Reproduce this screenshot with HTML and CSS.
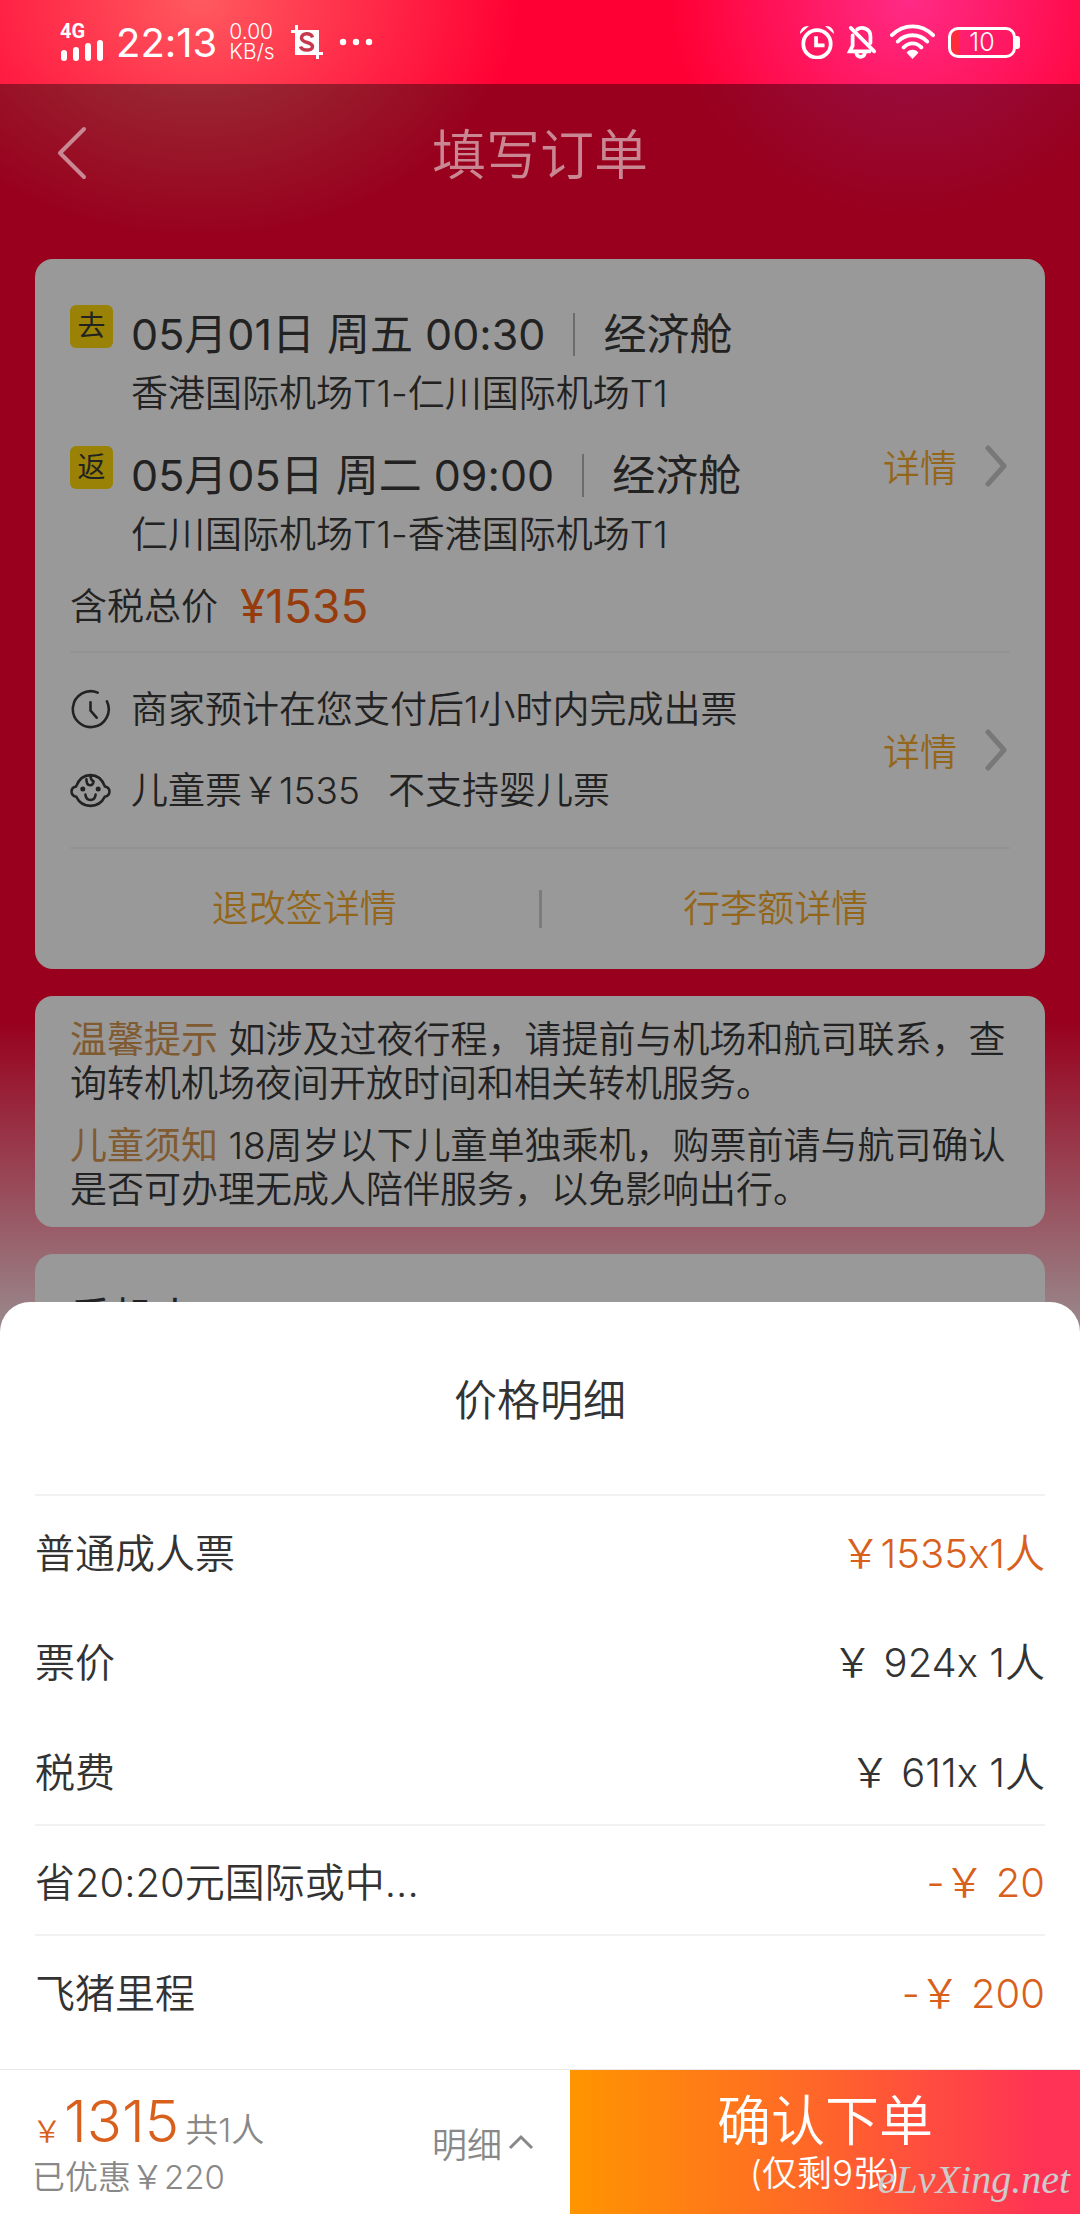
FILE: index.html
```html
<!DOCTYPE html>
<html lang="zh-CN">
<head>
<meta charset="utf-8">
<meta name="viewport" content="width=device-width, initial-scale=1">
<title>填写订单</title>
<link rel="stylesheet" href="styles.css">
</head>
<body>
<div class="app">
  <header class="statusbar">
    <div class="status-group">
      <div class="network">
        <span class="network-type">4G</span>
        <svg class="signal" viewBox="0 0 44 22" aria-hidden="true"><path d="M4 14v5M16 11v8M28 7v12M40 4v15" stroke="currentColor" stroke-width="6" stroke-linecap="round"/></svg>
      </div>
      <span class="clock">22:13</span>
      <div class="speed"><span>0.00</span><span>KB/s</span></div>
      <svg class="crop-icon" viewBox="0 0 32 34" aria-hidden="true"><path d="M4 5h24v25H4z" fill="currentColor"/><path d="M0 6.500h6M5.500 0v8M26 28.500h6M26.500 26v8" stroke="currentColor" stroke-width="3"/><path d="M21.500 12.500C20 7.500 10.500 7.500 10.500 13S21.500 16.500 21.500 21.500 11 26 9.500 21.500" fill="none" stroke="#c6384c" stroke-width="3.500"/></svg>
      <svg class="dots" viewBox="0 0 34 8" aria-hidden="true"><g fill="currentColor"><circle cx="4" cy="4" r="3.200"/><circle cx="17" cy="4" r="3.200"/><circle cx="30" cy="4" r="3.200"/></g></svg>
    </div>
    <div class="status-group status-right">
      <svg class="alarm" viewBox="0 0 36 36" fill="none" stroke="currentColor" aria-hidden="true"><circle cx="18" cy="20" r="14.500" stroke-width="4"/><path d="M17 12v9.500h9" stroke-width="4"/><path d="M0 9.500C0 4 4 .500 9.500 1zM36 9.500C36 4 32 .500 26.500 1z" fill="currentColor" stroke="none"/></svg>
      <svg class="bell" viewBox="0 0 32 36" fill="none" stroke="currentColor" stroke-width="4" stroke-linecap="round" aria-hidden="true"><path d="M6 11v11l-3 6h21M11 4.500C16 1 25 4 25 12v7M10 30c1 5 8 5 9 0"/><path d="M4 3l25 25"/></svg>
      <svg class="wifi" viewBox="0 0 46 36" fill="none" stroke="currentColor" stroke-width="4" stroke-linecap="round" aria-hidden="true"><path d="M2 11C14-1 32-1 44 11M8 17.500C16 9 30 9 38 17.500M14 23.500C19 18 27 18 32 23.500"/><path d="M17 29c2-4 10-4 12 0l-6 6.500z" fill="currentColor" stroke="none"/></svg>
      <div class="battery"><span>10</span></div>
    </div>
  </header>

  <div class="page">
    <nav class="titlebar">
      <button class="back" type="button" aria-label="返回"><svg viewBox="0 0 32 56" aria-hidden="true"><path d="M28 4L4 28l24 24" fill="none" stroke="currentColor" stroke-width="4" stroke-linecap="round" stroke-linejoin="round"/></svg></button>
      <h1>填写订单</h1>
    </nav>

    <main class="cards">
      <section class="card">
        <div class="block itinerary">
          <div class="block-main">
            <div class="flight">
              <span class="badge">去</span>
              <div>
                <p class="flight-date"><span>05月01日 周五 00:30</span><span class="cabin">经济舱</span></p>
                <p class="airports">香港国际机场T1-仁川国际机场T1</p>
              </div>
            </div>
            <div class="flight">
              <span class="badge">返</span>
              <div>
                <p class="flight-date"><span>05月05日 周二 09:00</span><span class="cabin">经济舱</span></p>
                <p class="airports">仁川国际机场T1-香港国际机场T1</p>
              </div>
            </div>
            <p class="total">含税总价<span class="total-price">¥1535</span></p>
          </div>
          <a class="more" href="#flight">详情<svg viewBox="0 0 22 42" aria-hidden="true"><path d="M3 3l16 18L3 39" fill="none" stroke="currentColor" stroke-width="5" stroke-linecap="round" stroke-linejoin="round"/></svg></a>
        </div>
        <div class="block rules">
          <div class="block-main">
            <p class="rule"><svg viewBox="0 0 40 40" fill="none" stroke="currentColor" stroke-width="2.500" stroke-linecap="round" aria-hidden="true"><path d="M27 3.500A17.500 17.500 0 1 0 36 12M20 13v8l6 7"/></svg>商家预计在您支付后1小时内完成出票</p>
            <p class="rule"><svg viewBox="0 0 40 40" fill="none" stroke="currentColor" stroke-width="2.500" stroke-linecap="round" aria-hidden="true"><path d="M6 16C9 8 14 5 20 5s11 3 14 11c6 1 6 9 0 10-3 6-8 9-14 9S9 32 6 26c-6-1-6-9 0-10zM15 24c1 7 9 7 10 0M16 9c0 8 7 7 7 2M20 5c0 3 1 5 3 6"/><circle cx="12.500" cy="18.500" r="1.200" fill="currentColor"/><circle cx="27.500" cy="18.500" r="1.200" fill="currentColor"/></svg><span>儿童票￥1535</span><span class="infant">不支持婴儿票</span></p>
          </div>
          <a class="more" href="#rules">详情<svg viewBox="0 0 22 42" aria-hidden="true"><path d="M3 3l16 18L3 39" fill="none" stroke="currentColor" stroke-width="5" stroke-linecap="round" stroke-linejoin="round"/></svg></a>
        </div>
        <div class="links"><a href="#refund">退改签详情</a><a href="#baggage">行李额详情</a></div>
      </section>

      <section class="card notice">
        <p><strong>温馨提示</strong> 如涉及过夜行程，请提前与机场和航司联系，查询转机机场夜间开放时间和相关转机服务。</p>
        <p><strong>儿童须知</strong> 18周岁以下儿童单独乘机，购票前请与航司确认是否可办理无成人陪伴服务，以免影响出行。</p>
      </section>

      <section class="card passengers"><h2>乘机人</h2></section>
    </main>
  </div>

  <section class="sheet" aria-label="价格明细">
    <h2 class="sheet-title">价格明细</h2>
    <table class="prices">
      <tbody>
        <tr class="ruled"><th scope="row">普通成人票</th><td class="accent">￥1535x1人</td></tr>
        <tr><th scope="row">票价</th><td>￥ 924x 1人</td></tr>
        <tr><th scope="row">税费</th><td>￥ 611x 1人</td></tr>
        <tr class="ruled"><th scope="row">省20:20元国际或中...</th><td class="accent">-￥ 20</td></tr>
        <tr class="ruled"><th scope="row">飞猪里程</th><td class="accent">-￥ 200</td></tr>
      </tbody>
    </table>
    <footer class="checkout">
      <div class="summary">
        <div class="amounts">
          <p class="pay"><span class="yen">￥</span><span class="amount">1315</span><span class="people">共1人</span></p>
          <p class="saved">已优惠￥220</p>
        </div>
        <button class="toggle" type="button">明细<svg viewBox="0 0 26 16" aria-hidden="true"><path d="M2 14L13 3l11 11" fill="none" stroke="currentColor" stroke-width="3"/></svg></button>
      </div>
      <button class="submit" type="button"><span class="submit-label">确认下单</span><span class="submit-note">(仅剩9张)</span></button>
      <span class="watermark">eLvXing.net</span>
    </footer>
  </section>
</div>
</body>
</html>
```
FILE: styles.css
```css
* { box-sizing: border-box; }

body {
  margin: 0;
  font-family: Inter, "Noto Sans CJK SC", sans-serif;
  font-weight: 350;
  font-variant-ligatures: no-contextual;
  color: #333;
  background: #fff;
}

h1, h2, p { margin: 0; font-weight: inherit; }
a { color: inherit; text-decoration: none; }
button { border: 0; padding: 0; background: none; color: inherit; font: inherit; }
svg { display: block; flex: none; }

.app {
  min-height: 100vh;
  display: flex;
  flex-direction: column;
}

/* Status bar */
.statusbar {
  height: 84px;
  padding: 0 64px 0 60px;
  display: flex;
  align-items: center;
  justify-content: space-between;
  color: #fff;
  background:
    radial-gradient(320px 240px at 200px 0, #ff5a5f, rgba(255, 60, 80, 0)),
    radial-gradient(240px 220px at 910px 0, #ff2b86, rgba(255, 20, 90, 0)),
    #ff0034;
}
.status-group { display: flex; align-items: center; }
.network { display: flex; flex-direction: column; width: 44px; }
.network-type { font-family: Roboto, sans-serif; font-size: 20px; line-height: 16px; font-weight: 700; }
.signal { width: 44px; height: 22px; }
.clock { margin-left: 12px; font-size: 40px; font-weight: 400; }
.speed { margin-left: 12px; display: flex; flex-direction: column; font-size: 21px; line-height: 20px; }
.crop-icon { margin-left: 16px; width: 32px; height: 34px; }
.dots { margin-left: 16px; width: 34px; height: 8px; }
.status-right { gap: 13px; }
.alarm { width: 34px; height: 34px; }
.bell { width: 30px; height: 34px; }
.wifi { width: 45px; height: 36px; }
.battery {
  position: relative;
  width: 68px;
  height: 31px;
  border: 3px solid currentColor;
  border-radius: 10px;
  background: linear-gradient(90deg, #ff2b3c 8px, transparent 8px);
  font-size: 25px;
  line-height: 25px;
  text-align: center;
}
.battery::after {
  content: "";
  position: absolute;
  right: -7px;
  top: 6px;
  width: 4px;
  height: 13px;
  border-radius: 0 3px 3px 0;
  background: currentColor;
}

/* Dimmed order page behind the sheet */
.page {
  background:
    radial-gradient(320px 240px at 200px -84px, rgba(154, 60, 62, 1), rgba(152, 0, 30, 0)),
    radial-gradient(240px 220px at 910px -84px, rgba(152, 20, 80, 0.9), rgba(152, 0, 30, 0)),
    linear-gradient(#98001d 936px, #999 1280px);
}
.titlebar {
  position: relative;
  height: 139px;
  padding-bottom: 4px;
  display: flex;
  align-items: center;
  justify-content: center;
  color: #c88793;
}
.titlebar h1 { font-size: 54px; }
.back { position: absolute; left: 56px; top: 41px; }
.back svg { width: 32px; height: 56px; }

.cards { padding: 36px 35px 0; display: flex; flex-direction: column; gap: 27px; color: #222; }
.card { background: #999; border-radius: 18px; padding: 0 35px; }

.block { display: flex; align-items: center; border-bottom: 2px solid #939393; }
.block-main { flex: 1; }
.itinerary { padding: 43px 0 22px; }
.flight { display: flex; gap: 18px; height: 141px; }
.badge {
  width: 43px;
  height: 43px;
  margin-top: 3px;
  border-radius: 6px;
  background: #998206;
  font-size: 28px;
  line-height: 43px;
  text-align: center;
  font-weight: 400;
}
.flight-date { display: flex; align-items: center; font-size: 43px; line-height: 64px; font-weight: 400; }
.cabin { display: flex; align-items: center; gap: 28px; margin-left: 28px; }
.cabin::before { content: ""; width: 2px; height: 43px; background: #6c6c6c; }
.airports { font-size: 37px; line-height: 56px; }
.total { display: flex; align-items: center; gap: 22px; font-size: 37px; line-height: 45px; }
.total-price { font-size: 46px; color: #963c0c; font-weight: 400; }
.more { display: flex; align-items: center; gap: 28px; padding-right: 3px; font-size: 37px; color: #93661a; }
.more svg { width: 22px; height: 42px; color: #787878; }

.rules { padding: 16px 0; }
.rule { display: flex; align-items: center; gap: 20px; font-size: 37px; line-height: 81px; }
.rule svg { width: 41px; height: 41px; }
.infant { margin-left: 8px; }

.links { display: flex; align-items: center; height: 120px; font-size: 37px; line-height: 38px; color: #93661a; }
.links a { flex: 1; text-align: center; }
.links a + a { border-left: 3px solid #7c7c7c; }

.notice { padding: 22px 30px 15px 35px; font-size: 37px; line-height: 44px; }
.notice p + p { margin-top: 18px; }
.notice strong { font-weight: 400; color: #805a30; }
.passengers { height: 100px; overflow: hidden; }
.passengers h2 { padding-top: 34px; font-size: 42px; line-height: 60px; font-weight: 400; }

/* Price sheet */
.sheet {
  position: relative;
  margin-top: -52px;
  flex: 1;
  display: flex;
  flex-direction: column;
  justify-content: space-between;
  background: #fff;
  border-radius: 30px 30px 0 0;
}
.sheet-title { height: 192px; padding-top: 4px; line-height: 188px; font-size: 43px; text-align: center; }
.prices { margin: 0 35px; border-collapse: collapse; }
.prices th, .prices td { height: 110px; padding: 0; font-size: 40px; font-weight: 350; }
.prices th { text-align: left; }
.prices td { text-align: right; }
.prices .ruled { border-top: 2px solid #f1f1f1; }
.prices .accent { color: #d8601c; }

.checkout {
  position: relative;
  margin-top: auto;
  display: grid;
  grid-template-columns: 570fr 510fr;
  height: 145px;
  border-top: 1px solid #e8e8e8;
}
.summary {
  display: flex;
  align-items: center;
  justify-content: space-between;
  padding: 0 36px 0 32px;
  color: #888;
}
.amounts { padding-top: 8px; }
.pay { display: flex; align-items: baseline; line-height: 52px; color: #d8601c; }
.yen { font-size: 30px; }
.amount { margin-left: 2px; font-size: 58px; }
.people { margin-left: 6px; font-size: 33px; color: #888; }
.saved { font-size: 33px; line-height: 40px; }
.toggle { display: flex; align-items: center; gap: 6px; font-size: 35px; }
.toggle svg { width: 26px; height: 16px; }
.submit {
  padding-top: 6px;
  display: flex;
  flex-direction: column;
  align-items: center;
  justify-content: center;
  color: #fff;
  background: linear-gradient(90deg, #ff9500, #ff6a26 45%, #ff3355 92%);
}
.submit-label { font-size: 54px; line-height: 56px; }
.submit-note { font-size: 35px; line-height: 46px; }
.watermark {
  position: absolute;
  right: 10px;
  bottom: 11px;
  font-family: "Liberation Serif", serif;
  font-style: italic;
  font-size: 40px;
  font-weight: 400;
  color: #ccc;
}
```
